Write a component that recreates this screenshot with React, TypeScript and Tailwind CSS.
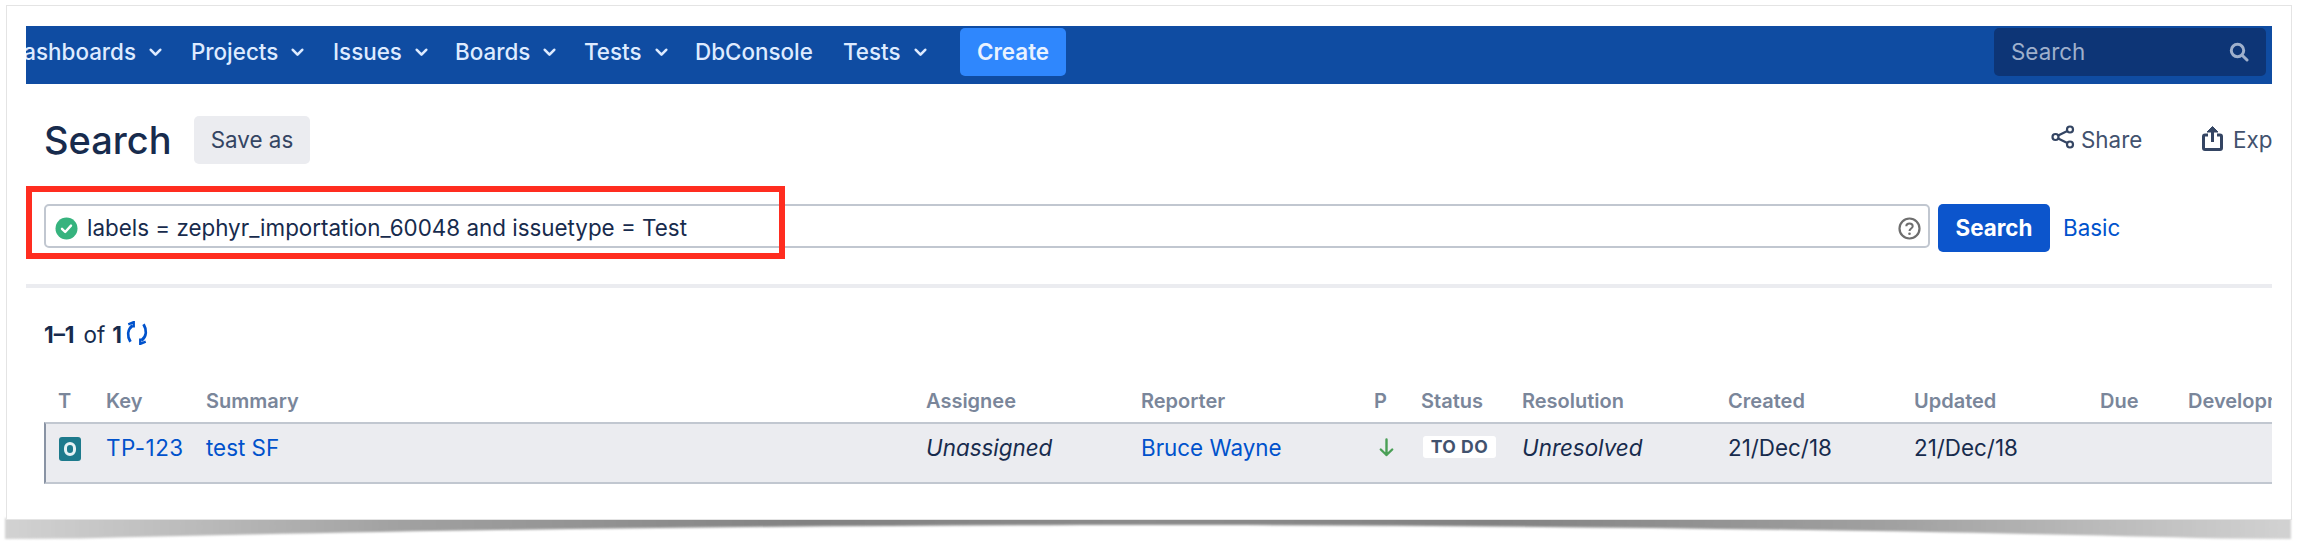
const font = "font-['Inter','Liberation_Sans',sans-serif]";

function Chevron() {
  return (
    <svg width="13" height="9" viewBox="0 0 13 9" className="ml-[13px] shrink-0">
      <path d="M1.8 1.8 L6.5 6.6 L11.2 1.8" fill="none" stroke="#deebff" strokeWidth="2.6" strokeLinecap="round" strokeLinejoin="round" />
    </svg>
  );
}

function NavItem({ label, width, chevron = true }: { label: string; width: string; chevron?: boolean }) {
  return (
    <div className={`flex items-center shrink-0 h-[48px] ${width}`}>
      <span className="text-[22.4px] leading-[48px] font-medium text-[#deebff] whitespace-nowrap">{label}</span>
      {chevron && <Chevron />}
    </div>
  );
}

const headers: [string, string][] = [
  ["T", "w-[48px]"],
  ["Key", "w-[100px]"],
  ["Summary", "w-[720px]"],
  ["Assignee", "w-[215px]"],
  ["Reporter", "w-[233px]"],
  ["P", "w-[47px]"],
  ["Status", "w-[101px]"],
  ["Resolution", "w-[206px]"],
  ["Created", "w-[186px]"],
  ["Updated", "w-[186px]"],
  ["Due", "w-[88px]"],
  ["Development", "w-[84px]"],
];

export default function App() {
  return (
    <div className={`relative w-[2306px] h-[549px] overflow-hidden bg-white ${font}`}>
      {/* curled drop shadow under the window */}
      <svg className="absolute left-0 top-[510px]" width="2306" height="39" viewBox="0 0 2306 39">
        <defs>
          <linearGradient id="sh" x1="0" y1="0" x2="1" y2="0">
            <stop offset="0" stopColor="#d2d2d2" />
            <stop offset="0.17" stopColor="#a2a2a2" />
            <stop offset="0.35" stopColor="#828282" />
            <stop offset="0.5" stopColor="#8c8c8c" />
            <stop offset="0.65" stopColor="#828282" />
            <stop offset="0.83" stopColor="#a2a2a2" />
            <stop offset="1" stopColor="#d2d2d2" />
          </linearGradient>
          <filter id="bl" x="-2%" y="-50%" width="104%" height="200%">
            <feGaussianBlur stdDeviation="1.2" />
          </filter>
        </defs>
        <path
          d="M5 8 L2291 8 L2291 29 L2220 28.5 C1900 20 1500 15 1153 15 C800 15 400 20 80 28.5 L5 29 Z"
          fill="url(#sh)"
          filter="url(#bl)"
        />
      </svg>

      <div className="relative ml-[6px] mt-[5px] w-[2286px] h-[515px] bg-white border border-[#e4e4e4] overflow-hidden">
        <div className="mx-[19px] mt-[20px] w-[2246px]">
          {/* nav */}
          <div className="h-[58px] bg-[#0f4ca2] flex items-start pt-[2px] overflow-hidden">
            <div className="flex items-center shrink-0">
              <div className="flex items-center justify-end shrink-0 w-[165px] h-[48px] pr-[29px]">
                <span className="text-[22.4px] leading-[48px] font-medium text-[#deebff] whitespace-nowrap">Dashboards</span>
                <Chevron />
              </div>
              <NavItem label="Projects" width="w-[142px]" />
              <NavItem label="Issues" width="w-[122px]" />
              <NavItem label="Boards" width="w-[129px]" />
              <NavItem label="Tests" width="w-[111px]" />
              <NavItem label="DbConsole" width="w-[148px]" chevron={false} />
              <NavItem label="Tests" width="w-[117px]" />
              <button className="w-[106px] h-[48px] rounded-[5px] bg-[#2f87fd] text-[#e9f2ff] text-[22.4px] font-semibold">
                Create
              </button>
            </div>
            <div className="ml-auto mr-[6px] w-[272px] h-[48px] rounded-[5px] bg-[#0d3576] flex items-center justify-between pl-[17px] pr-[17px]">
              <span className="text-[22.4px] text-[#9fb0cc]">Search</span>
              <svg width="20" height="20" viewBox="0 0 20 20" fill="none" stroke="#9fb0cc" strokeWidth="3" strokeLinecap="round">
                <circle cx="8.5" cy="8.5" r="6.2" />
                <path d="M13.2 13.2 L18 18" />
              </svg>
            </div>
          </div>

          {/* title row */}
          <div className="relative h-[48px] mt-[32px] flex items-center">
            <h1 className="ml-[18px] w-[150px] text-[38px] font-medium text-[#172b4d] leading-none">Search</h1>
            <button className="w-[116px] h-[48px] rounded-[5px] bg-[#ebecf0] text-[22.4px] text-[#344563]">
              Save as
            </button>
            <div className="ml-auto flex items-center text-[22.4px] text-[#42526e]">
              <svg width="24" height="24" viewBox="0 0 24 24" fill="none" stroke="#344563" strokeWidth="2.2" className="mt-[-6px]">
                <circle cx="19" cy="4.5" r="3" />
                <circle cx="4.5" cy="12" r="3" />
                <circle cx="19" cy="19.5" r="3" />
                <path d="M7.2 10.6 L16.3 5.9 M7.2 13.4 L16.3 18.1" />
              </svg>
              <span className="ml-[6px] w-[60px] whitespace-nowrap">Share</span>
              <svg width="21" height="26" viewBox="0 0 21 26" className="ml-[61px] mt-[-4px]" fill="none" stroke="#344563" strokeWidth="3">
                <path d="M6 10 H3 a1.5 1.5 0 0 0 -1.5 1.5 V23 a1.5 1.5 0 0 0 1.5 1.5 H18 a1.5 1.5 0 0 0 1.5 -1.5 V11.5 A1.5 1.5 0 0 0 18 10 H15" />
                <path d="M10.5 17 V3" />
                <path d="M5 7 L10.5 1.5 L16 7 Z" fill="#344563" strokeWidth="1" />
              </svg>
              <span className="ml-[10px] w-[39px] overflow-hidden">Export</span>
            </div>
          </div>

          {/* query row */}
          <div className="flex items-start mt-[40px] ml-[18px]">
            <div className="w-[1886px] h-[44px] rounded-[5px] border-[2.5px] border-[#c1c7d0] bg-white flex items-center pl-[9px] pr-[7px] pt-[4px]">
              <svg width="23" height="23" viewBox="0 0 23 23" className="shrink-0">
                <circle cx="11.5" cy="11.5" r="11" fill="#36b37e" />
                <path d="M7 11.8 L10.2 15 L16 8.6" fill="none" stroke="#fff" strokeWidth="2.4" strokeLinecap="round" strokeLinejoin="round" />
              </svg>
              <span className="ml-[9px] text-[22.4px] leading-[30px] text-[#172b4d] whitespace-nowrap">
                labels = zephyr_importation_60048 and issuetype = Test
              </span>
              <svg width="23" height="23" viewBox="0 0 23 23" fill="none" className="ml-auto shrink-0">
                <circle cx="11.5" cy="11.5" r="10" stroke="#6e6e6e" strokeWidth="2.2" />
                <path d="M8.3 9.2 C8.3 5.6 14.7 5.6 14.7 9.2 C14.7 11.5 11.5 11.5 11.5 14" stroke="#6e6e6e" strokeWidth="2" />
                <circle cx="11.5" cy="16.8" r="1.3" fill="#6e6e6e" />
              </svg>
            </div>
            <button className="ml-[8px] w-[112px] h-[48px] rounded-[5px] bg-[#0c55cc] text-white text-[22.4px] font-bold">
              Search
            </button>
            <a className="ml-[13px] mt-[2px] h-[44px] leading-[44px] text-[22.4px] text-[#0052cc]">Basic</a>
          </div>

          <div className="h-[4px] bg-[#ebecf0] mt-[32px]" />

          {/* result count */}
          <div className="flex items-center h-[24px] mt-[35px] ml-[18px] text-[22.4px] text-[#172b4d]">
            <span className="font-bold">1–1</span>
            <span className="ml-[9px]">of</span>
            <span className="ml-[7px] font-bold">1</span>
            <svg width="24" height="24" viewBox="0 0 22 22" fill="none" stroke="#0052cc" strokeWidth="2.6" className="ml-[3px] mt-[-4px]">
              <path d="M7 4 C2 8 2 14 5 19" />
              <path d="M3 3 L8 1 L8 6" strokeWidth="2.2" />
              <path d="M15 18 C20 14 20 8 17 3" />
              <path d="M19 19 L14 21 L14 16" strokeWidth="2.2" />
            </svg>
          </div>

          {/* results table */}
          <div className="ml-[18px] mt-[42px] w-[2228px] overflow-hidden">
            <div className="flex h-[33px] pl-[14px] text-[20px] leading-[24px] font-semibold text-[#7a869a] whitespace-nowrap">
              {headers.map(([h, w]) => (
                <div key={h} className={`${w} shrink-0 overflow-hidden`}>{h}</div>
              ))}
            </div>
            <div className="flex items-start h-[62px] pl-[12px] pt-[9px] bg-[#ebecf0] border-t-[2px] border-b-[2px] border-l-[2px] border-[#c1c7d0] border-l-[#8993a4] text-[22.4px] leading-[30px] text-[#172b4d] whitespace-nowrap">
              <div className="w-[48px] shrink-0 pt-[4px] pl-[1px]">
                <div className="w-[22px] h-[24px] rounded-[3px] bg-[#1d7a8c] flex items-center justify-center">
                  <div className="w-[12px] h-[14px] rounded-full border-[3px] border-[#e6f2f4]" />
                </div>
              </div>
              <div className="w-[100px] shrink-0 text-[#0052cc] tracking-[0.5px]">TP-123</div>
              <div className="w-[720px] shrink-0 text-[#0052cc]">test SF</div>
              <div className="w-[215px] shrink-0 italic">Unassigned</div>
              <div className="w-[233px] shrink-0 text-[#0052cc]">Bruce Wayne</div>
              <div className="w-[47px] shrink-0 pl-[5px] pt-[5px]">
                <svg width="15" height="19" viewBox="0 0 15 19" fill="none" stroke="#4a9f56" strokeWidth="2.4" strokeLinecap="round" strokeLinejoin="round">
                  <path d="M7.5 1.5 V17 M1.8 11.5 L7.5 17 L13.2 11.5" />
                </svg>
              </div>
              <div className="w-[101px] shrink-0 pl-[2px] pt-[3px]">
                <div className="w-[73px] h-[22px] rounded-[3px] bg-white text-center text-[17.6px] leading-[22px] font-bold text-[#42526e] tracking-[0.5px]">TO DO</div>
              </div>
              <div className="w-[206px] shrink-0 italic">Unresolved</div>
              <div className="w-[186px] shrink-0">21/Dec/18</div>
              <div className="w-[186px] shrink-0">21/Dec/18</div>
            </div>
          </div>
        </div>

        {/* red annotation rectangle */}
        <div className="absolute left-[19px] top-[180px] w-[759px] h-[73px] border-[6px] border-[#ff2d20]" />
      </div>
    </div>
  );
}
